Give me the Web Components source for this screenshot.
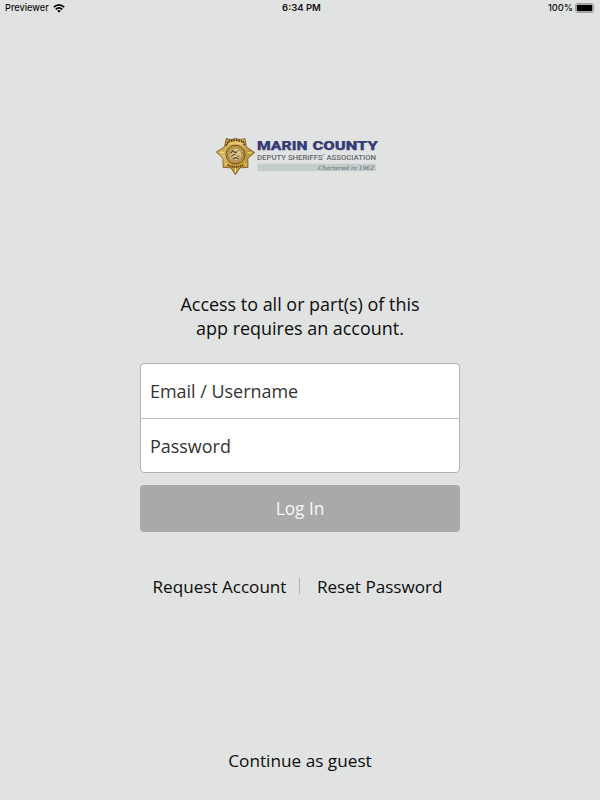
<!DOCTYPE html>
<html lang="en">
<head>
<meta charset="utf-8">
<title>Marin County Deputy Sheriffs' Association</title>
<style>
    html, body { height: 100%; margin: 0; }
    body {
        background: #e1e3e2;
        color: #0c0c0c;
        font-family: "Open Sans", "Noto Sans", sans-serif;
        font-size: 17.95px;
    }
</style>
</head>
<body>
<login-screen></login-screen>

<script>
function define(name, html) {
    const template = document.createElement("template");
    template.innerHTML = html;
    customElements.define(name, class extends HTMLElement {
        constructor() {
            super();
            this.attachShadow({ mode: "open" });
            this.shadowRoot.appendChild(template.content.cloneNode(true));
        }
    });
}

define("status-bar", `
<style>
    :host {
        display: grid;
        grid-template-columns: 1fr auto 1fr;
        align-items: center;
        height: 16px;
        padding: 0 4px 0 5px;
        font: 500 9.5px/16px Inter, "Liberation Sans", sans-serif;
        color: #111;
    }
    span { display: flex; align-items: center; }
    .left { gap: 4px; font-size: 9.2px; }
    .time { font-weight: 600; padding-left: 2px; }
    .right { justify-content: flex-end; gap: 2px; font-size: 9.3px; }
    svg { display: block; }
</style>
<span class="left">Previewer
    <svg width="12" height="9" viewBox="0 0 12 9" fill="none" stroke="#000" stroke-width="1.7">
        <path d="M0.8 3.2Q6 -1.4 11.2 3.2"/>
        <path d="M2.7 5.3Q6 2.4 9.3 5.3"/>
        <path d="M6 8.6L4.1 6.7Q6 5.2 7.9 6.7Z" fill="#000" stroke="none"/>
    </svg>
</span>
<span class="time">6:34 PM</span>
<span class="right">100%
    <svg width="21" height="10" viewBox="0 0 21 10">
        <rect x="0.5" y="0.5" width="18" height="9" rx="2" fill="none" stroke="#999b9a"/>
        <rect x="1.7" y="1.7" width="15.6" height="6.6" rx="0.8"/>
        <path d="M19.6 3.5Q20.9 5 19.6 6.5Z" fill="#999b9a"/>
    </svg>
</span>
`);

define("association-logo", `
<style>
    :host { display: block; width: 170px; height: 50px; }
    svg { display: block; }
</style>
<svg width="170" height="50" viewBox="210 130 170 50">
    <defs>
        <linearGradient id="gold" x1="0" y1="0" x2="1" y2="1">
            <stop offset="0" stop-color="#b08530"/>
            <stop offset="0.35" stop-color="#e0bf68"/>
            <stop offset="0.6" stop-color="#bd953c"/>
            <stop offset="1" stop-color="#d3a840"/>
        </linearGradient>
    </defs>
    <!-- seven pointed badge -->
    <path d="M226.3 138.5L231 139.6L235.5 138.4L240 139.6L245 138.5L246.5 147L254.6 152.5L247.8 158.5L248 167.4L240 167.8L235.5 174.8L230.8 167.8L223 167.4L223 158.5L216.3 152L224.4 147Z" fill="url(#gold)" stroke="#71501d" stroke-width="0.8" stroke-linejoin="round"/>
    <path d="M226 145.5L228 141.5L235.5 140L243.3 141.5L245 146" fill="none" stroke="#54380f" stroke-width="1.8" stroke-dasharray="1.6 0.9"/>
    <path d="M229 144.1Q235.5 141.2 242 144.1" fill="none" stroke="#f0d48a" stroke-width="1"/>
    <path d="M224 152.5L219.5 152.2M247.5 153L251.5 152.7M235.5 168V172M226.5 163.5L225 165.5M244.5 163.5L246 165.5" fill="none" stroke="#f5dc8e" stroke-width="1.2"/>
    <circle cx="235.4" cy="154.5" r="9.4" fill="#cba958" stroke="#644514" stroke-width="0.9"/>
    <circle cx="235.4" cy="154.5" r="7.9" fill="none" stroke="#866329" stroke-width="1.1" stroke-dasharray="0.9 0.9"/>
    <circle cx="235.4" cy="154.5" r="6.4" fill="#d8c18a" stroke="#8b6a33" stroke-width="0.5"/>
    <path d="M230.6 153.4L232.6 150.6L235.4 152.8L238.8 150.4M231 156.6L234 154.6L239.4 156.4M232.6 159.2L235.8 157.4L238.6 159" fill="none" stroke="#5e431a" stroke-width="1.1"/>
    <path d="M236.5 149.5L238.8 152.6M234 155.8H238" stroke="#f4e3b6" stroke-width="0.9"/>
    <path d="M227.5 165Q235.5 168.8 243.5 165" fill="none" stroke="#54380f" stroke-width="1.5" stroke-dasharray="1.3 0.8"/>

    <rect x="257.5" y="163.7" width="118.5" height="7.4" fill="#c5cdcc"/>
    <text x="257" y="150.3" font-family="Roboto, sans-serif" font-weight="900" font-size="13.6" fill="#363b76" stroke="#363b76" stroke-width="0.25"><tspan textLength="50.5" lengthAdjust="spacingAndGlyphs">MARIN</tspan> <tspan x="312.5" textLength="65.5" lengthAdjust="spacingAndGlyphs">COUNTY</tspan></text>
    <text x="257" y="159.7" textLength="119" lengthAdjust="spacingAndGlyphs" font-family="Roboto, sans-serif" font-weight="500" font-size="7.9" fill="#62666e">DEPUTY SHERIFFS’ ASSOCIATION</text>
    <text x="318" y="169.7" textLength="56" lengthAdjust="spacingAndGlyphs" font-family="'DejaVu Serif', serif" font-style="italic" font-size="5.8" fill="#566473">Chartered in 1962</text>
</svg>
`);

define("field-group", `
<style>
    :host {
        display: flex;
        flex-direction: column;
        box-sizing: border-box;
        width: 320px;
        height: 110px;
        background: #fff;
        border: 1px solid #afb0b0;
        border-radius: 4px;
    }
</style>
<slot></slot>
`);

define("form-field", `
<style>
    :host {
        display: flex;
        align-items: center;
        box-sizing: border-box;
        height: 54px;
        padding-left: 9px;
        color: #333;
    }
    :host(:not(:first-child)) {
        padding-top: 1px;
        border-top: 1px solid #c2c2c2;
    }
</style>
<slot></slot>
`);

define("login-button", `
<style>
    :host {
        display: flex;
        align-items: center;
        justify-content: center;
        width: 320px;
        height: 47px;
        margin-top: 12px;
        border-radius: 4px;
        background: #a9a9a9;
        color: #f8f8f8;
        font-size: 17.3px;
    }
</style>
<slot></slot>
`);

define("account-links", `
<style>
    :host {
        display: flex;
        align-items: center;
        height: 24px;
        margin: 42px 0 1px -5px;
        font-size: 17.1px;
        white-space: nowrap;
    }
    i { width: 1px; height: 16px; margin: 0 17px 0 12.5px; background: #b2b3b3; }
</style>
<slot name="request"></slot><i></i><slot name="reset"></slot>
`);

define("login-screen", `
<style>
    :host {
        display: flex;
        flex-direction: column;
        align-items: center;
        height: 100%;
    }
    status-bar { align-self: stretch; }
    association-logo { margin: 114px 0 0 -10px; }
    p { margin: 112px 0 23px; line-height: 24px; text-align: center; }
    .guest { margin-top: 150px; line-height: 24px; font-size: 17.2px; }
</style>
<status-bar></status-bar>
<association-logo></association-logo>
<p>Access to all or part(s) of this<br>app requires an account.</p>
<field-group>
    <form-field>Email / Username</form-field>
    <form-field>Password</form-field>
</field-group>
<login-button>Log In</login-button>
<account-links>
    <span slot="request">Request Account</span>
    <span slot="reset">Reset Password</span>
</account-links>
<div class="guest">Continue as guest</div>
`);
</script>
</body>
</html>
